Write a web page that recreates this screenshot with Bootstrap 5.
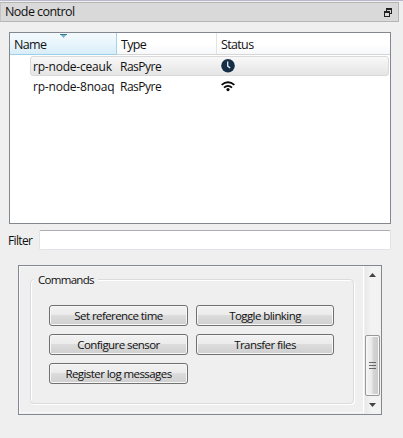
<!DOCTYPE html>
<html lang="en">
<head>
<meta charset="utf-8">
<meta name="viewport" content="width=device-width, initial-scale=1">
<title>Node control</title>
<link href="https://cdn.jsdelivr.net/npm/bootstrap@5.3.0/dist/css/bootstrap.min.css" rel="stylesheet">
<style>
body{width:403px;height:438px;overflow:hidden;background:#efefef;color:#111;font:12px/16px "Open Sans","Noto Sans",sans-serif;border-top:1px solid #b9bacd}
.dock-title{height:20px;margin:1px 4px 0 0;padding:0 6px 0 4px;background:#d9d9d9;border:1px solid #b5b5b5;border-left-color:#c4c4c4;font-size:12.5px;letter-spacing:-.55px}
.tree{margin:10px 12px 0 9px;height:192px;background:#fff;border:1px solid #828790}
.tree-head,.tree-row{display:grid;grid-template-columns:107px 100px 1fr}
.tree-head{height:22px;border-bottom:1px solid #d5d5d5;background:linear-gradient(#fff 50%,#f7f8fa)}
.tree-head>div{padding:4px 0 0 4px;border-right:1px solid #e2e3e5;font-size:12.5px;letter-spacing:-.65px}
.tree-head>.sorted{background:linear-gradient(#f4fafd,#e8f5fc 50%,#d8edf8);border-right-color:#a5d3e8;box-shadow:0 1px #9cd0e8}
.sort-arrow{left:50px;top:1px}
.tree-row{height:20px;margin-left:20px;margin-right:1px;grid-template-columns:87px 100px 1fr;border:1px solid transparent;border-radius:3px;letter-spacing:-.2px}
.tree-row>div{padding:2px 0 0 2px;white-space:nowrap}
.tree-row>.kind{letter-spacing:-.5px}
.tree-row>.state{padding:0 0 0 3px}
.tree-row.current{margin-top:1px;background:linear-gradient(#f8f8f8,#e5e5e5);border-color:#d9d9d9}
.filter-line{margin:6px 12px 0 8px;height:20px}
.filter-line label{width:31px;flex:none;letter-spacing:-.65px;padding-top:2px}
.filter-line .form-control{height:20px;min-height:0;padding:0 4px;font-size:12px;border:1px solid #e2e3ea;border-top-color:#abadb3;border-radius:2px;background:#fff}
.scroll-box{margin:15px 21px 0 18px;height:150px;border:1px solid #828790;box-shadow:inset 1px 1px #f8f8f8}
.scroll-content{width:345px;padding:13px 9px 10px 11px;border-right:1px solid #fff;border-bottom:1px solid #f6f9fc;margin-bottom:1px}
.group{height:125px;border:1px solid #d9dcdf;border-radius:4px;box-shadow:inset 1px 1px #fff,1px 1px #fff;padding:0 0 0 18px}
.group-label,.cmds .btn{font-size:11.5px;letter-spacing:-.57px}
.group-label{width:max-content;height:16px;margin:-9px 0 0 -15px;padding:1px 4px 0;background:#efefef;letter-spacing:-.7px}
.cmds{display:grid;grid-template-columns:139px 138px;column-gap:8px;row-gap:8px;margin-top:18px}
.cmds .btn{height:21px;padding:1px 0 0;border:1px solid #707070;border-radius:3px;color:#111;background:linear-gradient(#f2f2f2,#ebebeb 49%,#dcdcdc 50%,#cfcfcf);box-shadow:inset 0 0 0 1px #f7f7f7;line-height:18px}
.bar{width:16px;margin-left:1px;background:linear-gradient(90deg,#e9e9e9,#f3f3f3 40%,#f2f2f2);padding:7px 1px 7px 0}
.thumb{width:15px;height:61px;margin-bottom:7px;border:1px solid #989898;border-radius:2px;background:linear-gradient(90deg,#f5f5f5,#e8e8e8 48%,#d5d5d5 52%,#cacaca);box-shadow:inset 0 0 0 1px #f8f8f8}
svg{display:block}
</style>
<script src="https://cdn.jsdelivr.net/npm/bootstrap@5.3.0/dist/js/bootstrap.bundle.min.js"></script>
</head>
<body>
<header class="dock-title d-flex align-items-center justify-content-between">
<span>Node control</span>
<svg width="8" height="9" viewBox="0 0 8 9" shape-rendering="crispEdges"><path fill="#222" fill-rule="evenodd" d="M2 0h6v6H6V5h1V2H3v1H2zM0 3h6v6H0zM1 5v3h4V5z"/></svg>
</header>
<section class="tree">
<div class="tree-head">
<div class="sorted position-relative">Name<svg class="sort-arrow position-absolute" width="7" height="4" viewBox="0 0 7 4"><path d="M0 0h7L3.5 4z" fill="#75b2cd"/><path d="M0 0h7v1H0z" fill="#3c7892"/></svg></div>
<div>Type</div><div class="border-end-0">Status</div>
</div>
<div class="tree-row current"><div>rp-node-ceauk</div><div class="kind">RasPyre</div>
<div class="state"><svg width="14" height="16" viewBox="0 0 14 16"><circle cx="7" cy="8.8" r="6.8" fill="#152d45"/><path d="M6.7 4.5v4.6l2.5 2" fill="none" stroke="#e3edf4" stroke-width="1.3"/></svg></div></div>
<div class="tree-row"><div>rp-node-8noaq</div><div class="kind">RasPyre</div>
<div class="state"><svg width="14" height="16" viewBox="0 0 14 16" fill="none" stroke="#080808" stroke-width="1.8"><path d="M.6 7.9Q7 2.5 13.4 7.9M3 10.7q4-3.6 8 0"/><circle cx="7" cy="12.6" r="1.6" fill="#080808" stroke="none"/></svg></div></div>
</section>
<div class="filter-line d-flex align-items-center"><label for="filter">Filter</label><input id="filter" class="form-control flex-grow-1" type="text"></div>
<section class="scroll-box d-flex">
<div class="scroll-content">
<div class="group" role="group" aria-labelledby="commands"><div class="group-label" id="commands">Commands</div>
<div class="cmds">
<button class="btn" type="button">Set reference time</button><button class="btn" type="button">Toggle blinking</button>
<button class="btn" type="button">Configure sensor</button><button class="btn" type="button">Transfer files</button>
<button class="btn" type="button">Register log messages</button>
</div></div>
</div>
<div class="bar d-flex flex-column align-items-center">
<svg width="7" height="4" viewBox="0 0 7 4"><path d="M0 4h7L3.5 0z" fill="#444"/></svg>
<div class="thumb mt-auto d-flex align-items-center justify-content-center"><svg width="7" height="9" viewBox="0 0 7 9" stroke="#666" shape-rendering="crispEdges"><path d="M0 1.5h7M0 4.5h7M0 7.5h7"/></svg></div>
<svg width="7" height="4" viewBox="0 0 7 4"><path d="M0 0h7L3.5 4z" fill="#444"/></svg>
</div>
</section>
</body>
</html>
